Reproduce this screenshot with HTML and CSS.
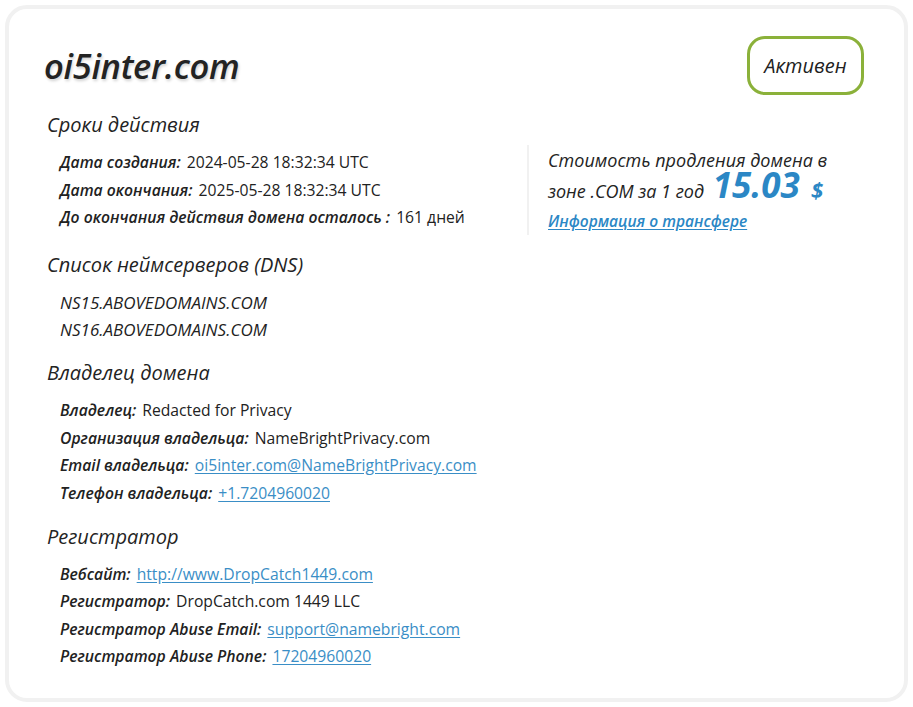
FILE: index.html
```html
<!DOCTYPE html>
<html lang="ru">
<head>
<meta charset="utf-8">
<title>oi5inter.com</title>
<link rel="stylesheet" href="styles.css">
</head>
<body>
<div class="card">
  <header class="head">
    <h1 class="domain">oi5inter.com</h1>
    <span class="status">Активен</span>
  </header>

  <section class="section">
    <h2 class="section-title">Сроки действия</h2>
    <div class="split">
      <ul class="rows">
        <li><span class="label">Дата создания:</span> <span class="value">2024-05-28 18:32:34 UTC</span></li>
        <li><span class="label">Дата окончания:</span> <span class="value">2025-05-28 18:32:34 UTC</span></li>
        <li><span class="label">До окончания действия домена осталось :</span> <span class="value">161 дней</span></li>
      </ul>
      <aside class="renew">
        <p class="renew-text">Стоимость продления домена в зоне .COM за 1 год <span class="price">15.03</span><span class="currency">$</span></p>
        <a class="transfer" href="#">Информация о трансфере</a>
      </aside>
    </div>
  </section>

  <section class="section">
    <h2 class="section-title">Список неймсерверов (DNS)</h2>
    <ul class="rows">
      <li><span class="ns">NS15.ABOVEDOMAINS.COM</span></li>
      <li><span class="ns">NS16.ABOVEDOMAINS.COM</span></li>
    </ul>
  </section>

  <section class="section">
    <h2 class="section-title">Владелец домена</h2>
    <ul class="rows">
      <li><span class="label">Владелец:</span> <span class="value">Redacted for Privacy</span></li>
      <li><span class="label">Организация владельца:</span> <span class="value">NameBrightPrivacy.com</span></li>
      <li><span class="label">Email владельца:</span> <a class="value link" href="#">oi5inter.com@NameBrightPrivacy.com</a></li>
      <li><span class="label">Телефон владельца:</span> <a class="value link" href="#">+1.7204960020</a></li>
    </ul>
  </section>

  <section class="section">
    <h2 class="section-title">Регистратор</h2>
    <ul class="rows">
      <li><span class="label">Вебсайт:</span> <a class="value link" href="#">http://www.DropCatch1449.com</a></li>
      <li><span class="label">Регистратор:</span> <span class="value">DropCatch.com 1449 LLC</span></li>
      <li><span class="label">Регистратор Abuse Email:</span> <a class="value link" href="#">support@namebright.com</a></li>
      <li><span class="label">Регистратор Abuse Phone:</span> <a class="value link" href="#">17204960020</a></li>
    </ul>
  </section>
</div>
</body>
</html>
```

FILE: styles.css
```css
* {
  box-sizing: border-box;
}

html,
body {
  margin: 0;
  padding: 0;
  background: #ffffff;
}

body {
  font-family: "Open Sans", "Noto Sans", "Liberation Sans", sans-serif;
  color: #222222;
}

.card {
  margin: 5px;
  height: 697px;
  border: 4px solid #f1f1f1;
  border-radius: 22px;
  background: #ffffff;
  padding: 27px 40px 0 35px;
}

/* header: domain name and status pill */
.head {
  display: flex;
  justify-content: space-between;
  align-items: center;
  height: 59px;
  margin-bottom: 16px;
}

.domain {
  margin: 0;
  font-size: 34.5px;
  font-weight: 600;
  font-style: italic;
  letter-spacing: -0.3px;
  color: #232323;
  text-shadow: 1px 2px 3px rgba(0, 0, 0, 0.18);
}

.status {
  display: flex;
  align-items: center;
  justify-content: center;
  width: 117px;
  height: 59px;
  border: 3px solid #8bb13a;
  border-radius: 18px;
  font-size: 20px;
  font-style: italic;
  font-weight: 500;
  color: #222222;
}

/* sections */
.section {
  margin-bottom: 15.5px;
  padding-left: 3px;
}

.section-title {
  margin: 0 0 10px;
  font-size: 20px;
  line-height: 28px;
  font-weight: 400;
  font-style: italic;
  color: #232323;
}

.rows {
  list-style: none;
  margin: 0;
  padding: 0 0 0 13px;
}

.rows li {
  height: 27.5px;
  line-height: 27.5px;
  font-size: 15.7px;
  white-space: nowrap;
}

.label {
  font-style: italic;
  font-weight: 600;
  margin-right: 2px;
}

.value {
  font-weight: 400;
}

.link {
  color: #3a8ec6;
  text-decoration: underline;
  text-underline-offset: 2px;
}

.ns {
  font-style: italic;
  font-weight: 500;
  font-size: 17px;
}

/* first section: dates beside the renewal price */
.split {
  display: flex;
}

.split .rows {
  width: 480px;
  flex: none;
}

.renew {
  margin-top: -4px;
  height: 90px;
  border-left: 2px solid #f1f1f1;
  padding-left: 19px;
  width: 320px;
}

.renew-text {
  margin: 0;
  width: 300px;
  font-size: 18px;
  font-style: italic;
  font-weight: 500;
  line-height: 31px;
  color: #232323;
}

/* big figures must not stretch the text line */
.price {
  font-size: 35px;
  font-weight: 700;
  color: #2b87c5;
  margin-left: 4px;
  line-height: 0;
}

.currency {
  font-size: 22px;
  font-weight: 700;
  color: #2b87c5;
  margin-left: 11px;
  line-height: 0;
}

.transfer {
  display: block;
  margin-top: 3px;
  font-size: 15.5px;
  font-style: italic;
  font-weight: 600;
  color: #2b87c5;
  text-decoration: underline;
  text-underline-offset: 2px;
}
```
